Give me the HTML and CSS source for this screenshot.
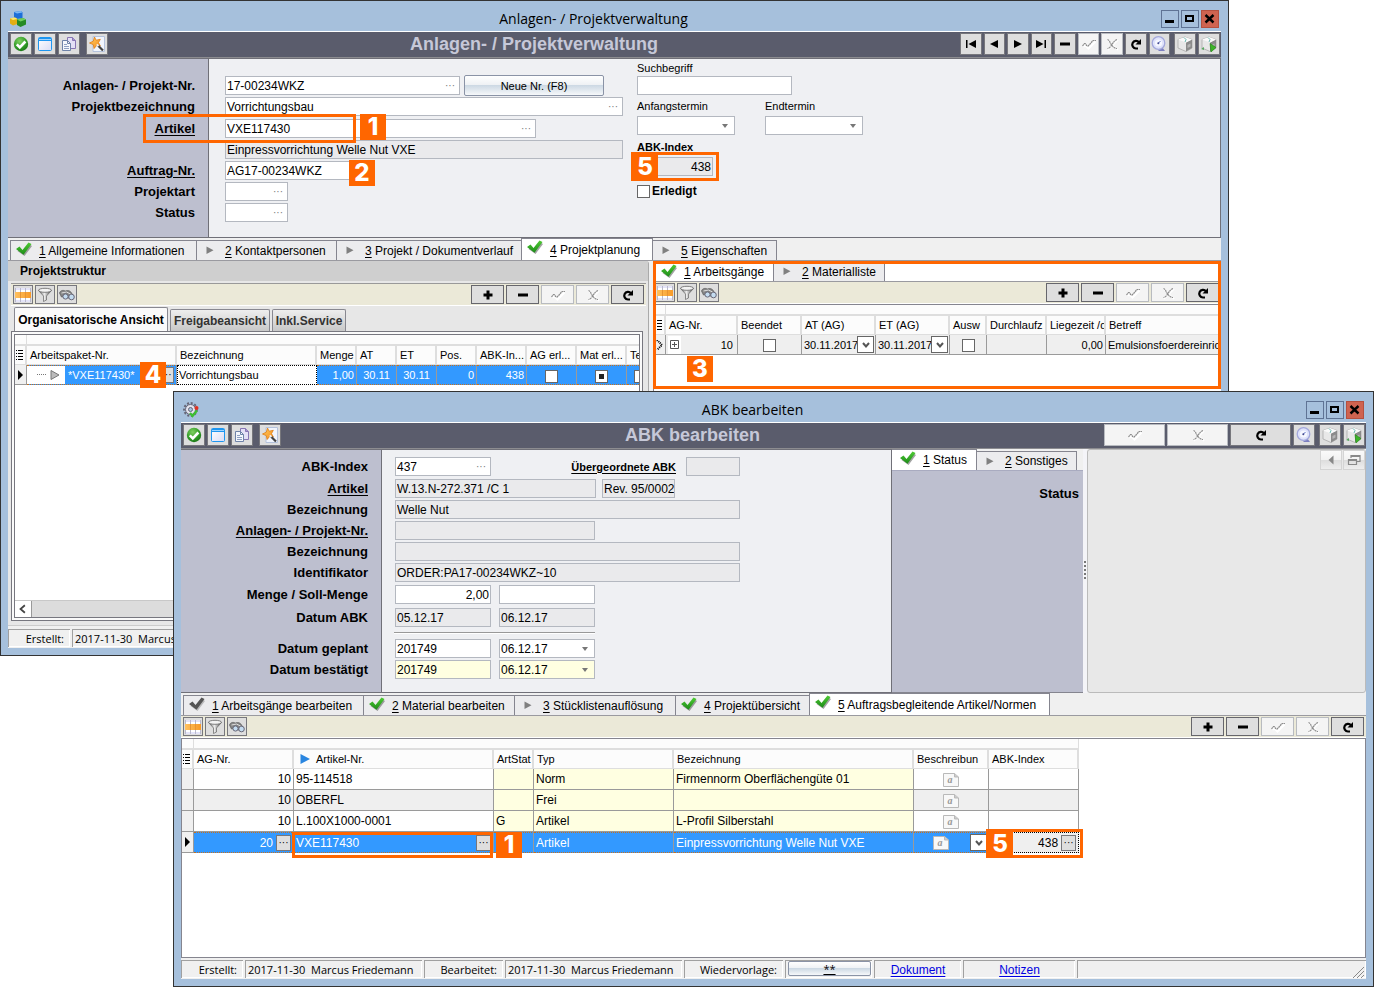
FILE: index.html
```html
<!DOCTYPE html>
<html lang="de">
<head>
<meta charset="utf-8">
<title>Anlagen- / Projektverwaltung</title>
<link rel="stylesheet" href="styles.css">
</head>
<body>
<svg class="sprite" aria-hidden="true">
  <defs>
    <radialGradient id="g-green" cx=".4" cy=".3" r=".8"><stop offset="0" stop-color="#7fd060"/><stop offset=".6" stop-color="#2f9a25"/><stop offset="1" stop-color="#146a12"/></radialGradient>
    <linearGradient id="g-check" x1="0" y1="0" x2="0" y2="1"><stop offset="0" stop-color="#4fcc34"/><stop offset="1" stop-color="#1c8a18"/></linearGradient>
    <linearGradient id="g-pane" x1="0" y1="0" x2="1" y2="1"><stop offset="0" stop-color="#fff"/><stop offset="1" stop-color="#d9dcf5"/></linearGradient>
    <linearGradient id="g-metal" x1="0" y1="0" x2="1" y2="0"><stop offset="0" stop-color="#555"/><stop offset=".45" stop-color="#eee"/><stop offset="1" stop-color="#444"/></linearGradient>
    <linearGradient id="g-orange" x1="0" y1="0" x2="1" y2="1"><stop offset="0" stop-color="#ffd060"/><stop offset="1" stop-color="#f58a1c"/></linearGradient>
    <linearGradient id="g-band" x1="0" y1="0" x2="1" y2="0"><stop offset="0" stop-color="#ffc260"/><stop offset="1" stop-color="#f79a28"/></linearGradient>
    <symbol id="i-ok" viewBox="0 0 16 16"><circle cx="8" cy="8" r="7.2" fill="url(#g-green)"/><path d="M3.8 8.3l3 3 5.6-5.8" fill="none" stroke="#fff" stroke-width="2.6"/></symbol>
    <symbol id="i-window" viewBox="0 0 16 16"><rect x="1.5" y="1.5" width="13" height="13" rx="1" fill="url(#g-pane)" stroke="#1e96f0"/><path d="M2 2.5h12M2 4.5h12" stroke="#1e96f0"/><path d="M2 3.5h12" stroke="#9fd4ff"/></symbol>
    <symbol id="i-docs" viewBox="0 0 16 16"><path d="M6.5 1.500h5l3 3v8h-8z" fill="#e4e0f6" stroke="#8876b4"/><path d="M11.500 1.500v3h3" fill="#a796d0" stroke="#8876b4"/><path d="M1.500 4.500h5l3 3v7h-8z" fill="#f4f7fc" stroke="#6f83a8"/><path d="M6.500 4.500v3h3" fill="none" stroke="#6f83a8"/><path d="M3 8.500h3M3 10.500h5M3 12.500h5" stroke="#8ea0c2"/></symbol>
    <symbol id="i-wand" viewBox="0 0 16 16"><path d="M4 .5h11.500v15H4z" fill="#f1f5fd" stroke="#b4c2dc"/><path d="M5.500 1l1.600 3.200 4.200-.9-1.800 3.300 1.900 3.400-3.800-.5-2.500 3-.8-3.900L.5 7l3.800-1.800z" fill="url(#g-orange)" stroke="#e07c10" stroke-width=".8"/><path d="M9 9.500l5 5" stroke="#444" stroke-width="2.200"/><path d="M7.800 8.300l1.700 1.700" stroke="#eee" stroke-width="1.800"/></symbol>
    <symbol id="i-first" viewBox="0 0 16 16"><path d="M3 4h1.500v8H3zM13 4v8L5.500 8z"/></symbol>
    <symbol id="i-prev" viewBox="0 0 16 16"><path d="M12 4v8L4 8z"/></symbol>
    <symbol id="i-next" viewBox="0 0 16 16"><path d="M4 4v8l8-4z"/></symbol>
    <symbol id="i-last" viewBox="0 0 16 16"><path d="M11.500 4H13v8h-1.500zM3 4v8l7.500-4z"/></symbol>
    <symbol id="i-minus" viewBox="0 0 16 16"><path d="M3 6.500h10v3H3z"/></symbol>
    <symbol id="i-plus" viewBox="0 0 16 16"><path d="M6.500 3.500h3v3h3v3h-3v3h-3v-3h-3v-3h3z"/></symbol>
    <symbol id="i-commit" viewBox="0 0 16 16"><path d="M2.500 10.500l2-1 3 3 7-7" fill="none" stroke="#fff" stroke-width="2"/><path d="M1.500 10l2-2.500h1l1 2 1.500.5 2-2 3-3.500H15" fill="none" stroke="#8c8c8c" stroke-width="1.200" stroke-dasharray="2 .5"/></symbol>
    <symbol id="i-cancel" viewBox="0 0 16 16"><path d="M4 4l10 10M14 4L4 14" stroke="#fff" stroke-width="1.500"/><path d="M3.500 3.500c3 1 3 8 9.500 9M13 3.500c-5 2-5 8-9.500 9" fill="none" stroke="#8c8c8c" stroke-width="1.200" stroke-dasharray="2 .5"/></symbol>
    <symbol id="i-refresh" viewBox="0 0 16 16"><path d="M10 12.500H8a3.800 3.800 0 1 1 3-6.200" fill="none" stroke="#000" stroke-width="2.200"/><path d="M13 3v5.500H7.500z"/></symbol>
    <symbol id="i-clock" viewBox="0 0 16 16"><path d="M11 11l3 4H7z" fill="#7c7fc0"/><circle cx="7.500" cy="7" r="6.300" fill="#dfe3fb" stroke="#a3a8dc" stroke-width="1.300"/><circle cx="7.500" cy="7" r="3.600" fill="#f6f7ff"/><path d="M7.500 7l2-2" stroke="#5c74c8"/><circle cx="7.300" cy="7.300" r="1" fill="#444a90"/></symbol>
    <symbol id="i-box" viewBox="0 0 16 16"><path d="M1 3.500L8 1l7 2.500V12l-6 3.500L1 12z" fill="#e8e8e8" stroke="#aaa" stroke-width=".8"/><path d="M9 6.500l6-3V12l-6 3.500z" fill="#8b8b8b"/><path d="M1 3.500l8 3 6-3L8 1z" fill="#fafafa"/><path d="M7 1.500l2 2-1 2.500" stroke="#68b8b0" fill="none"/><path d="M10.500 9l3-1.500v3L10.500 12z" fill="#b5b5b5"/></symbol>
    <symbol id="i-boxgo" viewBox="0 0 16 16"><use href="#i-box"/><path d="M0 13l3-2v3z" fill="#58a860"/><path d="M9 7.500l6 4-5 4.500z" fill="#3cb428" stroke="#238414" stroke-width=".6"/></symbol>
    <symbol id="i-grid" viewBox="0 0 16 16"><path d="M0 1h16v14H0z" fill="#fff"/><path d="M0 1h16v2H0zM0 13h16v2H0z" fill="#e4e4f8"/><path d="M.5 1v14M5.500 1v14M10.500 1v14M15.500 1v14" stroke="#b9b9cc"/><path d="M0 5h16v6H0z" fill="url(#g-band)"/><path d="M5.500 5v6M10.500 5v6" stroke="#e79434"/></symbol>
    <symbol id="i-filter" viewBox="0 0 16 16"><path d="M1.500 3.500L6.500 9v5.500l3-1.500V9l5-5.500z" fill="url(#g-metal)" stroke="#666" stroke-width=".7"/><ellipse cx="8" cy="3.300" rx="6.500" ry="2" fill="#f3f3f3" stroke="#666" stroke-width=".8"/></symbol>
    <symbol id="i-find" viewBox="0 0 16 16"><path d="M.5 6c1-3 4-3 6-2 3-1 5 0 6 2l2 3-5 2-3-2-4 1z" fill="#868686" stroke="#555" stroke-width=".7"/><circle cx="6.500" cy="9.500" r="2.600" fill="#c4dcf0" stroke="#667"/><circle cx="12.500" cy="10" r="2.800" fill="#c4dcf0" stroke="#667"/><path d="M2.500 6l5-1 4 2" stroke="#ddd" fill="none"/></symbol>
    <symbol id="i-check" viewBox="0 0 16 16"><path d="M1.500 9L4 7l3 3L13.500 2.500 16 4 8.500 14z" fill="#666" opacity=".6"/><path d="M0 7l3.500-2.500L6.500 8l6-7.500L15.500 2 7.500 12.800z" fill="url(#g-check)"/></symbol>
    <symbol id="i-check-gray" viewBox="0 0 16 16"><path d="M1.500 9L4 7l3 3L13.500 2.500 16 4 8.500 14z" fill="#999" opacity=".6"/><path d="M0 7l3.500-2.500L6.500 8l6-7.500L15.500 2 7.500 12.800z" fill="#555"/></symbol>
    <symbol id="i-play" viewBox="0 0 16 16"><path d="M4.500 4.500v7.500l7-3.700z" fill="#808080"/></symbol>
    <symbol id="i-logo" viewBox="0 0 16 16"><path d="M4 1l7-1 1.500 1.500V7L7 8 4 6.500z" fill="#1d6fd8"/><path d="M4 1l7-1 1.500 1.500L7 2.500z" fill="#7cb8f5"/><path d="M0 7.500l5-1L7.500 8v5L3 14.500l-3-2z" fill="#e2ae14"/><path d="M0 7.500l5-1L7.500 8 3 9z" fill="#ffe868"/><path d="M7 8.500l6-1.500 3 1.500v5L10.500 16 7 14z" fill="#258a24"/><path d="M7 8.500l6-1.500 3 1.500-5.500 2z" fill="#70cf5c"/></symbol>
    <symbol id="i-gear" viewBox="0 0 16 16"><circle cx="7.500" cy="7.500" r="5" fill="#e4e4ee" stroke="#667" stroke-width="1"/><circle cx="7.500" cy="7.500" r="6.400" fill="none" stroke="#667" stroke-width="2" stroke-dasharray="2 1.700"/><circle cx="7.500" cy="7.500" r="2" fill="#a6c0dc" stroke="#667"/><circle cx="13.500" cy="6" r="2" fill="#e03020"/><path d="M7 11l2.500 3L14 8.500" fill="none" stroke="#3cc030" stroke-width="2.200"/></symbol>
    <symbol id="i-list" viewBox="0 0 8 10"><path d="M0 .5h1M2 .5h5M0 3.500h1M2 3.500h5M0 6.500h1M2 6.500h5M0 9.500h1M2 9.500h5" stroke="#000" /></symbol>
    <symbol id="i-row" viewBox="0 0 8 10"><path d="M1 0v10l5-5z"/></symbol>
    <symbol id="i-memo" viewBox="0 0 16 14"><path d="M.5.500h11l4 3.500v9.500H.5z" fill="#f8f8f8" stroke="#b9b9b9"/><path d="M11.500.500V4h4" fill="#ccc" stroke="#b9b9b9"/></symbol>
    <symbol id="i-drop" viewBox="0 0 8 8"><path d="M1 2l3 3.500L7 2" fill="none" stroke="#555" stroke-width="2"/></symbol>
  </defs>
</svg>

<main class="desktop">

<section class="window window-project" aria-label="Anlagen- / Projektverwaltung">
  <header class="titlebar">
    <svg class="icon"><use href="#i-logo"/></svg>
    <h1 class="title">Anlagen- / Projektverwaltung</h1>
    <div class="winbtns">
      <button class="winbtn" aria-label="Minimieren"><svg viewBox="0 0 16 16"><path d="M3 9h9v3H3z"/></svg></button>
      <button class="winbtn" aria-label="Maximieren"><svg viewBox="0 0 16 16"><path d="M4 5h7v5H4z" fill="none" stroke="#000" stroke-width="2"/></svg></button>
      <button class="winbtn close" aria-label="Schließen"><svg viewBox="0 0 16 16"><path d="M3.500 4l8 7.500M11.500 4l-8 7.500" stroke="#000" stroke-width="2.400"/></svg></button>
    </div>
  </header>
  <div class="client">
    <div class="actionbar">
      <div class="bar-group">
        <button class="tool" aria-label="OK"><svg class="icon"><use href="#i-ok"/></svg></button>
        <button class="tool" aria-label="Fenster"><svg class="icon"><use href="#i-window"/></svg></button>
        <button class="tool" aria-label="Kopieren"><svg class="icon"><use href="#i-docs"/></svg></button>
        <button class="tool apart" aria-label="Assistent"><svg class="icon"><use href="#i-wand"/></svg></button>
      </div>
      <h2 class="bar-title">Anlagen- / Projektverwaltung</h2>
      <div class="bar-group nav">
        <div class="navset">
          <button class="tool" aria-label="Erster"><svg class="icon"><use href="#i-first"/></svg></button>
          <button class="tool" aria-label="Vorheriger"><svg class="icon"><use href="#i-prev"/></svg></button>
          <button class="tool" aria-label="Nächster"><svg class="icon"><use href="#i-next"/></svg></button>
          <button class="tool" aria-label="Letzter"><svg class="icon"><use href="#i-last"/></svg></button>
          <button class="tool" aria-label="Löschen"><svg class="icon"><use href="#i-minus"/></svg></button>
          <button class="tool off" disabled aria-label="Speichern"><svg class="icon"><use href="#i-commit"/></svg></button>
          <button class="tool off" disabled aria-label="Verwerfen"><svg class="icon"><use href="#i-cancel"/></svg></button>
          <button class="tool" aria-label="Aktualisieren"><svg class="icon"><use href="#i-refresh"/></svg></button>
          <button class="tool" aria-label="Wiedervorlage"><svg class="icon"><use href="#i-clock"/></svg></button>
        </div>
        <button class="tool" aria-label="Paket"><svg class="icon"><use href="#i-box"/></svg></button>
        <button class="tool" aria-label="Paket starten"><svg class="icon"><use href="#i-boxgo"/></svg></button>
      </div>
    </div>

    <div class="form form-project">
      <div class="rows">
        <div class="row"><label for="p-nr">Anlagen- / Projekt-Nr.</label><span class="field w235"><input id="p-nr" value="17-00234WKZ"><button class="dots" aria-label="Auswahl">···</button></span><button class="glossy">Neue Nr. (F8)</button></div>
        <div class="row"><label for="p-bez">Projektbezeichnung</label><span class="field w398"><input id="p-bez" value="Vorrichtungsbau"><button class="dots" aria-label="Auswahl">···</button></span></div>
        <div class="row lead1"><label for="p-art" class="link">Artikel</label><span class="field w311"><input id="p-art" value="VXE117430"><button class="dots" aria-label="Auswahl">···</button></span></div>
        <div class="row"><label></label><span class="field ro w398"><input aria-label="Artikelbezeichnung" readonly value="Einpressvorrichtung Welle Nut VXE"></span></div>
        <div class="row"><label for="p-auf" class="link">Auftrag-Nr.</label><span class="field w126"><input id="p-auf" value="AG17-00234WKZ"></span></div>
        <div class="row"><label for="p-typ">Projektart</label><span class="field w63"><input id="p-typ"><button class="dots" aria-label="Auswahl">···</button></span></div>
        <div class="row"><label for="p-st">Status</label><span class="field w63"><input id="p-st"><button class="dots" aria-label="Auswahl">···</button></span></div>
      </div>
      <div class="side">
        <div class="stack"><label for="p-such">Suchbegriff</label><span class="field w155"><input id="p-such"></span></div>
        <div class="pair">
          <div class="stack"><label for="p-anf">Anfangstermin</label><select id="p-anf" class="combo w98"><option></option></select></div>
          <div class="stack"><label for="p-end">Endtermin</label><select id="p-end" class="combo w98"><option></option></select></div>
        </div>
        <div class="stack index"><label for="p-abk"><b>ABK-Index</b></label><span class="field ro num w76"><input id="p-abk" readonly value="438"></span></div>
        <label class="tick"><input type="checkbox">Erledigt</label>
      </div>
    </div>

    <div class="tabs" role="tablist">
      <button class="tab t186" role="tab"><svg class="icon"><use href="#i-check"/></svg><span><u>1</u> Allgemeine Informationen</span></button>
      <button class="tab t140" role="tab"><svg class="icon"><use href="#i-play"/></svg><span><u>2</u> Kontaktpersonen</span></button>
      <button class="tab t185" role="tab"><svg class="icon"><use href="#i-play"/></svg><span><u>3</u> Projekt / Dokumentverlauf</span></button>
      <button class="tab t131 active" role="tab" aria-selected="true"><svg class="icon"><use href="#i-check"/></svg><span><u>4</u> Projektplanung</span></button>
      <button class="tab t124" role="tab"><svg class="icon"><use href="#i-play"/></svg><span><u>5</u> Eigenschaften</span></button>
    </div>

    <div class="split">
      <div class="structure">
        <h3 class="panel-head">Projektstruktur</h3>
        <div class="gridbar">
          <button class="mini" aria-label="Ansicht"><svg class="icon"><use href="#i-grid"/></svg></button>
          <button class="mini" aria-label="Filter"><svg class="icon"><use href="#i-filter"/></svg></button>
          <button class="mini" aria-label="Suchen"><svg class="icon"><use href="#i-find"/></svg></button>
          <span class="spring"></span>
          <button class="wide" aria-label="Neu"><svg class="icon"><use href="#i-plus"/></svg></button>
          <button class="wide" aria-label="Löschen"><svg class="icon"><use href="#i-minus"/></svg></button>
          <button class="wide off" disabled aria-label="Speichern"><svg class="icon"><use href="#i-commit"/></svg></button>
          <button class="wide off" disabled aria-label="Verwerfen"><svg class="icon"><use href="#i-cancel"/></svg></button>
          <button class="wide" aria-label="Aktualisieren"><svg class="icon"><use href="#i-refresh"/></svg></button>
        </div>
        <div class="subtabs" role="tablist">
          <button class="subtab s154 active" role="tab" aria-selected="true">Organisatorische Ansicht</button>
          <button class="subtab s100" role="tab">Freigabeansicht</button>
          <button class="subtab s74" role="tab">Inkl.Service</button>
        </div>
        <div class="frame">
          <div class="frame-in">
            <div class="gridclip">
            <table class="grid grid-structure">
              <colgroup><col class="c12"><col class="c150"><col class="c140"><col class="c40"><col class="c40"><col class="c40"><col class="c40"><col class="c50"><col class="c50"><col class="c50"><col class="c50"></colgroup>
              <thead>
                <tr class="band"><td></td><td colspan="10"></td></tr>
                <tr><th><svg class="mark"><use href="#i-list"/></svg></th><th>Arbeitspaket-Nr.</th><th>Bezeichnung</th><th>Menge</th><th>AT</th><th>ET</th><th>Pos.</th><th>ABK-In...</th><th>AG erl...</th><th>Mat erl...</th><th>Te</th></tr>
              </thead>
              <tbody>
                <tr class="sel"><td class="ind"><svg class="mark"><use href="#i-row"/></svg></td><td class="tree"><div class="treecell"><svg class="node" viewBox="0 0 38 18"><path d="M10 8.500h10" stroke="#777" stroke-dasharray="1 1"/><path d="M24 4.500v9l8-4.500z" fill="#bbb" stroke="#777"/></svg><span>*VXE117430*</span><button class="cellbtn" aria-label="Auswahl">···</button></div></td><td class="focus">Vorrichtungsbau</td><td class="r">1,00</td><td class="c">30.11</td><td class="c">30.11</td><td class="r">0</td><td class="r">438</td><td class="c"><input type="checkbox" aria-label="AG erledigt"></td><td class="c"><input type="checkbox" checked aria-label="Mat erledigt"></td><td class="tick-cell"><input type="checkbox" aria-label="Te"></td></tr>
              </tbody>
            </table>
            </div>
            <div class="scroll"><button class="scroll-btn" aria-label="Nach links"><svg viewBox="0 0 8 8"><path d="M5.500 1L2 4l3.500 3" fill="none" stroke="#444" stroke-width="1.400"/></svg></button><span class="thumb"></span></div>
          </div>
        </div>
      </div>

      <div class="operations">
        <div class="tabs inner" role="tablist">
          <button class="tab t119 active" role="tab" aria-selected="true"><svg class="icon"><use href="#i-check"/></svg><span><u>1</u> Arbeitsgänge</span></button>
          <button class="tab t111" role="tab"><svg class="icon"><use href="#i-play"/></svg><span><u>2</u> Materialliste</span></button>
        </div>
        <div class="gridbar">
          <button class="mini" aria-label="Ansicht"><svg class="icon"><use href="#i-grid"/></svg></button>
          <button class="mini" aria-label="Filter"><svg class="icon"><use href="#i-filter"/></svg></button>
          <button class="mini" aria-label="Suchen"><svg class="icon"><use href="#i-find"/></svg></button>
          <span class="spring"></span>
          <button class="wide" aria-label="Neu"><svg class="icon"><use href="#i-plus"/></svg></button>
          <button class="wide" aria-label="Löschen"><svg class="icon"><use href="#i-minus"/></svg></button>
          <button class="wide off" disabled aria-label="Speichern"><svg class="icon"><use href="#i-commit"/></svg></button>
          <button class="wide off" disabled aria-label="Verwerfen"><svg class="icon"><use href="#i-cancel"/></svg></button>
          <button class="wide" aria-label="Aktualisieren"><svg class="icon"><use href="#i-refresh"/></svg></button>
        </div>
        <div class="gridclip boxed">
          <table class="grid grid-ops">
            <colgroup><col class="c12"><col class="c72"><col class="c64"><col class="c74"><col class="c74"><col class="c37"><col class="c60"><col class="c59"><col class="c140"></colgroup>
            <thead>
              <tr class="band"><td></td><td colspan="8"></td></tr>
              <tr><th><svg class="mark"><use href="#i-list"/></svg></th><th>AG-Nr.</th><th>Beendet</th><th>AT (AG)</th><th>ET (AG)</th><th>Ausw</th><th>Durchlaufz</th><th>Liegezeit /d</th><th>Betreff</th></tr>
            </thead>
            <tbody>
              <tr class="alt"><td class="ind"><svg class="mark"><path d="M1 0l5 5-5 5" fill="none" stroke="#000" stroke-dasharray="1 1" stroke-width="2"/></svg></td><td><div class="expand"><button aria-label="Aufklappen"><svg viewBox="0 0 9 9"><path d="M.5.5h8v8h-8zM2 4.500h5M4.500 2v5" fill="none" stroke="#555"/></svg></button><span>10</span></div></td><td class="c"><input type="checkbox" aria-label="Beendet"></td><td><div class="datecell"><span>30.11.2017</span><button aria-label="Datum wählen"><svg><use href="#i-drop"/></svg></button></div></td><td><div class="datecell"><span>30.11.2017</span><button aria-label="Datum wählen"><svg><use href="#i-drop"/></svg></button></div></td><td class="c"><input type="checkbox" aria-label="Auswahl"></td><td></td><td class="r">0,00</td><td>Emulsionsfoerdereinric</td></tr>
            </tbody>
          </table>
        </div>
        <span class="callout around"></span>
        <span class="badge b3">3</span>
      </div>
    </div>

    <footer class="statusbar">
      <span class="cell key k62">Erstellt:</span>
      <span class="cell val grow">2017-11-30&nbsp; Marcus Friedemann</span>
    </footer>
  </div>
  <span class="callout m1"></span><span class="badge b1">1</span>
  <span class="badge b2">2</span>
  <span class="callout m5"></span><span class="badge b5">5</span>
  <span class="badge b4">4</span>
</section>

<section class="window window-abk" aria-label="ABK bearbeiten">
  <header class="titlebar">
    <svg class="icon"><use href="#i-gear"/></svg>
    <h1 class="title">ABK bearbeiten</h1>
    <div class="winbtns">
      <button class="winbtn" aria-label="Minimieren"><svg viewBox="0 0 16 16"><path d="M3 9h9v3H3z"/></svg></button>
      <button class="winbtn" aria-label="Maximieren"><svg viewBox="0 0 16 16"><path d="M4 5h7v5H4z" fill="none" stroke="#000" stroke-width="2"/></svg></button>
      <button class="winbtn close" aria-label="Schließen"><svg viewBox="0 0 16 16"><path d="M3.500 4l8 7.500M11.500 4l-8 7.500" stroke="#000" stroke-width="2.400"/></svg></button>
    </div>
  </header>
  <div class="client">
    <div class="actionbar">
      <div class="bar-group">
        <button class="tool" aria-label="OK"><svg class="icon"><use href="#i-ok"/></svg></button>
        <button class="tool" aria-label="Fenster"><svg class="icon"><use href="#i-window"/></svg></button>
        <button class="tool" aria-label="Kopieren"><svg class="icon"><use href="#i-docs"/></svg></button>
        <button class="tool apart" aria-label="Assistent"><svg class="icon"><use href="#i-wand"/></svg></button>
      </div>
      <h2 class="bar-title">ABK bearbeiten</h2>
      <div class="bar-group nav">
        <div class="navset long">
          <button class="tool off" disabled aria-label="Speichern"><svg class="icon"><use href="#i-commit"/></svg></button>
          <button class="tool off" disabled aria-label="Verwerfen"><svg class="icon"><use href="#i-cancel"/></svg></button>
          <button class="tool" aria-label="Aktualisieren"><svg class="icon"><use href="#i-refresh"/></svg></button>
        </div>
        <button class="tool clock" aria-label="Wiedervorlage"><svg class="icon"><use href="#i-clock"/></svg></button>
        <button class="tool" aria-label="Paket"><svg class="icon"><use href="#i-box"/></svg></button>
        <button class="tool" aria-label="Paket starten"><svg class="icon"><use href="#i-boxgo"/></svg></button>
      </div>
    </div>

    <div class="upper">
      <div class="form form-abk">
        <div class="rows">
          <div class="row"><label for="a-ix">ABK-Index</label><span class="field w96"><input id="a-ix" value="437"><button class="dots" aria-label="Auswahl">···</button></span><label for="a-up" class="link small">Übergeordnete ABK</label><span class="field ro w54"><input id="a-up" readonly></span></div>
          <div class="row lead1"><label for="a-art" class="link">Artikel</label><span class="field ro w201"><input id="a-art" readonly value="W.13.N-272.371 /C 1"></span><span class="field ro w73"><input aria-label="Revision" readonly value="Rev. 95/0002"></span></div>
          <div class="row"><label for="a-bez">Bezeichnung</label><span class="field ro w345"><input id="a-bez" readonly value="Welle Nut"></span></div>
          <div class="row"><label for="a-pr" class="link">Anlagen- / Projekt-Nr.</label><span class="field ro w200"><input id="a-pr" readonly></span></div>
          <div class="row"><label for="a-bz2">Bezeichnung</label><span class="field ro w345"><input id="a-bz2" readonly></span></div>
          <div class="row"><label for="a-id">Identifikator</label><span class="field ro w345"><input id="a-id" readonly value="ORDER:PA17-00234WKZ~10"></span></div>
          <div class="row lead1"><label for="a-mg">Menge / Soll-Menge</label><span class="field num w96"><input id="a-mg" value="2,00"></span><span class="field w96"><input aria-label="Soll-Menge"></span></div>
          <div class="row lead2"><label for="a-dat">Datum ABK</label><span class="field ro w96"><input id="a-dat" readonly value="05.12.17"></span><span class="field ro w96"><input aria-label="Datum ABK bis" readonly value="06.12.17"></span></div>
          <hr>
          <div class="row"><label for="a-gp">Datum geplant</label><span class="field w96"><input id="a-gp" value="201749"></span><select class="combo w96" aria-label="Datum geplant"><option>06.12.17</option></select></div>
          <div class="row"><label for="a-bs">Datum bestätigt</label><span class="field yellow w96"><input id="a-bs" value="201749"></span><select class="combo yellow w96" aria-label="Datum bestätigt"><option>06.12.17</option></select></div>
        </div>
      </div>
      <div class="statuspane">
        <div class="tabs" role="tablist">
          <button class="tab t84 active" role="tab" aria-selected="true"><svg class="icon"><use href="#i-check"/></svg><span><u>1</u> Status</span></button>
          <button class="tab t100" role="tab"><svg class="icon"><use href="#i-play"/></svg><span><u>2</u> Sonstiges</span></button>
        </div>
        <div class="statusbody">Status</div>
      </div>
      <div class="splitter"><svg viewBox="0 0 4 20"><path d="M2 0v20" stroke="#777" stroke-width="2" stroke-dasharray="2 2"/></svg></div>
      <div class="preview">
        <button class="flat" aria-label="Zurück"><svg viewBox="0 0 16 16"><path d="M10.500 3.500v9L5.500 8z" fill="#888"/></svg></button>
        <button class="flat" aria-label="Fenster lösen"><svg viewBox="0 0 16 16"><path d="M5 6V3.500h9v6h-3M5 4.500h9M2.500 7.500h8v5h-8zM2.500 8.500h8" fill="none" stroke="#888" stroke-width="1.200"/></svg></button>
      </div>
    </div>

    <div class="tabs" role="tablist">
      <button class="tab t180" role="tab"><svg class="icon"><use href="#i-check-gray"/></svg><span><u>1</u> Arbeitsgänge bearbeiten</span></button>
      <button class="tab t151" role="tab"><svg class="icon"><use href="#i-check"/></svg><span><u>2</u> Material bearbeiten</span></button>
      <button class="tab t161" role="tab"><svg class="icon"><use href="#i-play"/></svg><span><u>3</u> Stücklistenauflösung</span></button>
      <button class="tab t134" role="tab"><svg class="icon"><use href="#i-check"/></svg><span><u>4</u> Projektübersicht</span></button>
      <button class="tab t240 active" role="tab" aria-selected="true"><svg class="icon"><use href="#i-check"/></svg><span><u>5</u> Auftragsbegleitende Artikel/Normen</span></button>
    </div>
    <div class="gridbar">
      <button class="mini" aria-label="Ansicht"><svg class="icon"><use href="#i-grid"/></svg></button>
      <button class="mini" aria-label="Filter"><svg class="icon"><use href="#i-filter"/></svg></button>
      <button class="mini" aria-label="Suchen"><svg class="icon"><use href="#i-find"/></svg></button>
      <span class="spring"></span>
      <button class="wide" aria-label="Neu"><svg class="icon"><use href="#i-plus"/></svg></button>
      <button class="wide" aria-label="Löschen"><svg class="icon"><use href="#i-minus"/></svg></button>
      <button class="wide off" disabled aria-label="Speichern"><svg class="icon"><use href="#i-commit"/></svg></button>
      <button class="wide off" disabled aria-label="Verwerfen"><svg class="icon"><use href="#i-cancel"/></svg></button>
      <button class="wide" aria-label="Aktualisieren"><svg class="icon"><use href="#i-refresh"/></svg></button>
    </div>
    <div class="gridclip boxed">
      <table class="grid grid-items">
        <colgroup><col class="c12"><col class="c100"><col class="c200"><col class="c40"><col class="c140"><col class="c240"><col class="c75"><col class="c90"></colgroup>
        <thead>
          <tr class="band"><td></td><td colspan="7"></td></tr>
          <tr><th><svg class="mark"><use href="#i-list"/></svg></th><th>AG-Nr.</th><th><span class="sorted"><svg viewBox="0 0 10 10"><path d="M.5 0v10L10 5z" fill="#2a86e0"/></svg>Artikel-Nr.</span></th><th>ArtStat</th><th>Typ</th><th>Bezeichnung</th><th>Beschreibun</th><th>ABK-Index</th></tr>
        </thead>
        <tbody>
          <tr><td class="ind"></td><td class="r">10</td><td>95-114518</td><td class="y"></td><td class="y">Norm</td><td class="y">Firmennorm Oberflächengüte 01</td><td class="c"><span class="memo"><svg><use href="#i-memo"/></svg><i>a</i></span></td><td></td></tr>
          <tr class="alt"><td class="ind"></td><td class="r">10</td><td>OBERFL</td><td class="y"></td><td class="y">Frei</td><td class="y"></td><td class="c"><span class="memo"><svg><use href="#i-memo"/></svg><i>a</i></span></td><td></td></tr>
          <tr><td class="ind"></td><td class="r">10</td><td>L.100X1000-0001</td><td class="y">G</td><td class="y">Artikel</td><td class="y">L-Profil Silberstahl</td><td class="c"><span class="memo"><svg><use href="#i-memo"/></svg><i>a</i></span></td><td></td></tr>
          <tr class="sel"><td class="ind"><svg class="mark"><use href="#i-row"/></svg></td><td><div class="btncell end"><span>20</span><button class="cellbtn" aria-label="Auswahl">···</button></div></td><td><div class="btncell"><span>VXE117430</span><button class="cellbtn" aria-label="Auswahl">···</button></div></td><td></td><td>Artikel</td><td>Einpressvorrichtung Welle Nut VXE</td><td><div class="memocell"><span class="memo"><svg><use href="#i-memo"/></svg><i>a</i></span><button aria-label="Öffnen"><svg><use href="#i-drop"/></svg></button></div></td><td class="focus gray"><div class="btncell end"><span>438</span><button class="cellbtn" aria-label="Auswahl">···</button></div></td></tr>
        </tbody>
      </table>
    </div>

    <footer class="statusbar">
      <span class="cell key k62">Erstellt:</span>
      <span class="cell val k177">2017-11-30&nbsp; Marcus Friedemann</span>
      <span class="cell key k79">Bearbeitet:</span>
      <span class="cell val k177">2017-11-30&nbsp; Marcus Friedemann</span>
      <span class="cell key k99">Wiedervorlage:</span>
      <span class="cell k87"><button class="glossy slim"><u>**</u></button></span>
      <span class="cell k87 mid"><a href="#dokument">Dokument</a></span>
      <span class="cell k112 mid"><a href="#notizen">Notizen</a></span>
      <span class="cell grow last"><svg class="grip" viewBox="0 0 12 12"><path d="M1 12L12 1M5 12l7-7M9 12l3-3" stroke="#888"/></svg></span>
    </footer>
  </div>
  <span class="callout n1"></span><span class="badge nb1">1</span>
  <span class="callout n5"></span><span class="badge nb5">5</span>
</section>

</main>
</body>
</html>
```
FILE: styles.css
```css
* { box-sizing: border-box; }
body { margin: 0; background: #fff; color: #000; font: 12px/16px "Liberation Sans", Arial, sans-serif; }
button, input, select { font: inherit; color: inherit; margin: 0; padding: 0; }
button { display: flex; align-items: center; justify-content: center; cursor: default; }
h1, h2, h3 { margin: 0; }
.sprite { position: absolute; width: 0; height: 0; }
.icon { width: 16px; height: 16px; flex: none; display: block; }

.desktop { position: relative; min-height: 100vh; overflow: hidden; }

/* windows */
.window { position: absolute; display: flex; flex-direction: column; padding: 1px 8px 8px; background: #a6c0dc; box-shadow: inset 0 0 0 1px #333; }
.window-project { top: 0; left: 0; right: 145px; bottom: 331px; }
.window-abk { top: 391px; left: 173px; right: 0; bottom: 0; }
.titlebar { display: flex; align-items: center; height: 30px; flex: none; padding: 5px 2px 0 2px; }
.title { flex: 1; text-align: center; font: 14px/20px "Open Sans", "Noto Sans", sans-serif; }
.winbtns { display: flex; gap: 2px; }
.winbtn { width: 18px; height: 18px; border: 1px solid #5f7394; background: #a6c0dc; }
.winbtn svg { width: 16px; height: 16px; }
.winbtn.close { background: #cf6350; border-color: #b5503f; }
.client { flex: 1; min-height: 0; display: flex; flex-direction: column; border-top: 1px solid #fff; background: #f0f0f0; }

.actionbar { display: flex; align-items: center; height: 26px; flex: none; padding: 0 1px 1px 2px; background: #5a5c6c; border-bottom: 1px solid #8c8c90; }
.bar-group { display: flex; gap: 2px; flex: none; }
.bar-title { flex: 1; text-align: center; font-size: 18px; line-height: 22px; color: #c6c8d8; }
.tool { width: 22px; height: 22px; border: 1px solid #77777c; background: #dedede; flex: none; }
.tool.apart { margin-left: 4px; }
.tool.off, .wide.off { background: #f4f4f4; border-color: #b8bbc0; }
.navset { display: flex; gap: 2px; width: 210px; margin-right: 2px; flex: none; }
.navset .tool { flex: 1; width: auto; }
.navset.long { width: 187px; margin-right: 0; }
.tool.clock { margin-right: 2px; }

/* forms */
.form { background: linear-gradient(90deg, #bdbfcf 200px, #707078 200px, #707078 201px, #eff0f3 201px); border: solid #707078; border-width: 1px 1px 1px 0; flex: none; display: flex; }
.form-project { padding: 17px 0 15px; gap: 14px; border-left: 0; }
.rows { display: flex; flex-direction: column; gap: 2px; }
.row { display: flex; align-items: center; height: 19px; }
.row > label:first-child { width: 187px; text-align: right; font-weight: bold; font-size: 13px; flex: none; }
.row.lead1 { margin-top: 1px; }
.row.lead2 { margin-top: 2px; }
.link { text-decoration: underline; text-underline-offset: 2px; }
.form-project .row > label:first-child { margin-right: 30px; }
.form-project .rows { width: 615px; }
.field { display: flex; align-items: center; height: 19px; border: 1px solid #b4b8c0; background: #fff; flex: none; }
.field input { flex: 1; min-width: 0; width: 100%; height: 17px; border: 0; outline: 0; background: transparent; padding: 0 0 0 1px; }
.field.ro { background: #eaeaec; }
.field.num input { text-align: right; padding-right: 1px; }
.yellow.yellow { background-color: #ffffe1; }
.dots { border: 0; background: none; width: 18px; height: 17px; font-size: 10px; color: #777; flex: none; }
.combo { appearance: none; height: 19px; border: 1px solid #b4b8c0; border-radius: 0; background: #fff url("data:image/svg+xml,%3Csvg xmlns='http://www.w3.org/2000/svg' width='6' height='4'%3E%3Cpath d='M0 0h6L3 4z' fill='%23777'/%3E%3C/svg%3E") no-repeat right 6px center; padding: 0 0 0 1px; line-height: 16px; flex: none; }
.glossy { width: 140px; height: 21px; margin-left: 4px; border: 1px solid #8a93a6; border-radius: 2px; background: linear-gradient(#fff, #eef1f4 48%, #cdd9e4 50%, #f6f8fa); font-size: 11px; flex: none; }
.glossy.slim { width: 83px; height: 15px; margin: 0; }
.w54 { width: 54px; } .w63 { width: 63px; } .w73 { width: 73px; } .w76 { width: 76px; }
.w96 { width: 96px; } .w98 { width: 98px; } .w126 { width: 126px; } .w155 { width: 155px; }
.w200 { width: 200px; } .w201 { width: 201px; } .w235 { width: 235px; } .w311 { width: 311px; }
.w345 { width: 345px; } .w398 { width: 398px; }

.side { display: flex; flex-direction: column; margin-top: -16px; }
.side label { font-size: 11px; line-height: 16px; display: block; }
.stack { display: flex; flex-direction: column; align-items: flex-start; }
.pair { display: flex; gap: 30px; margin-top: 3px; }
.pair .stack, .index.stack { gap: 2px; }
.index { margin-top: 4px; }
.side .tick { display: flex; align-items: center; gap: 2px; margin-top: 7px; font-size: 12px; font-weight: bold; }
input[type="checkbox"] { appearance: none; display: inline-block; width: 13px; height: 13px; border: 1px solid #666; background: #fff; vertical-align: middle; flex: none; }
input[type="checkbox"]:checked { background: #222 content-box; padding: 3px; box-shadow: inset 0 0 0 3px #fff; }

.form-abk { width: 711px; padding: 7px 0 13px; }
.form-abk .row { gap: 8px; }
.form-abk .row > label:first-child { margin-right: 19px; }
.form-abk .row .w201 + .field { margin-left: -2px; }
.form-abk .row label.small { font-size: 11px; font-weight: bold; width: 177px; text-align: right; margin-right: 2px; }
.form-abk hr { width: 201px; height: 2px; margin: 3px 0 3px 213px; border: 0; border-top: 1px solid #999; background: #fff; }

/* tabs */
.tabs { display: flex; align-items: flex-end; height: 23px; flex: none; padding-left: 2px; border-bottom: 1px solid #9a9aa0; }
.tab { justify-content: flex-start; gap: 7px; height: 20px; padding: 0 0 0 5px; border: solid #85858f; border-width: 1px 1px 0 1px; margin-left: -1px; background: #ececee; flex: none; white-space: nowrap; }
.tab:first-child { margin-left: 0; }
.tab.active { height: 22px; background: #fff; }
.tab .icon { align-self: flex-start; margin-top: 1px; }
.tab u { text-underline-offset: 2px; }
.t84 { width: 85px; } .t100 { width: 101px; } .t111 { width: 112px; } .t119 { width: 121px; }
.t124 { width: 125px; } .t131 { width: 132px; } .t134 { width: 135px; } .t140 { width: 141px; }
.t151 { width: 152px; } .t161 { width: 162px; } .t180 { width: 181px; } .t185 { width: 186px; }
.t186 { width: 187px; } .t240 { width: 241px; }
.tabs.inner { height: 21px; padding-left: 0; background: #fff; }
.tabs.inner .tab.active { height: 20px; border-top: 0; padding: 2px 0 0 8px; border-left: 0; }

/* project planning */
.split { flex: 1; min-height: 0; display: flex; gap: 4px; }
.structure { width: 641px; flex: none; display: flex; flex-direction: column; background: #e7e7e7; border-right: 1px solid #aaa; border-bottom: 1px solid #ccc; border-radius: 0 3px 3px 0; margin-bottom: 1px; }
.panel-head { height: 20px; font-size: 12px; line-height: 20px; padding-left: 12px; background: #cfcfcf; margin-bottom: 2px; }
.gridbar { display: flex; align-items: center; gap: 2px; height: 22px; flex: none; padding: 0 2px; background: #ebe9d8; border-bottom: 1px solid #fff; }
.structure .gridbar { margin: 0 2px 0 3px; border-top: 1px solid #999; height: 23px; }
.spring { flex: 1; }
.mini { width: 20px; height: 19px; border: 1px solid #77777c; background: #dedede; }
.wide { width: 33px; height: 19px; border: 1px solid #66666c; background: #dedede; }
.subtabs { display: flex; align-items: flex-end; gap: 2px; height: 25px; flex: none; padding-left: 6px; }
.subtab { height: 22px; border: 1px solid #888890; border-bottom: 0; border-radius: 2px 2px 0 0; background: linear-gradient(#eee, #c8c8c8); color: #333; font-weight: bold; white-space: nowrap; }
.subtab.active { height: 24px; background: #fafafa; color: #000; }
.s154 { width: 154px; } .s100 { width: 100px; } .s74 { width: 74px; }
.frame { flex: 1; min-height: 0; display: flex; margin: 0 5px 4px 3px; padding: 2px; border: 1px solid #77777f; background: #fafafa; }
.frame-in { flex: 1; min-width: 0; display: flex; flex-direction: column; border: 1px solid #77777f; background: #fff; }
.scroll { display: flex; height: 17px; background: #dcdcdc; border-top: 1px solid #c8c8c8; flex: none; }
.scroll-btn { width: 17px; border: 0; border-right: 1px solid #999; background: #fff; }
.scroll-btn svg { width: 10px; height: 10px; }
.operations { position: relative; flex: 1; min-width: 0; display: flex; flex-direction: column; background: #fff; }

/* data grids */
.gridclip { flex: 1; min-height: 0; overflow: hidden; background: #fff; }
.gridclip.boxed { border: 1px solid #85858f; }
.operations .boxed { border-width: 1px 0 0 1px; }
.grid { table-layout: fixed; border-collapse: separate; border-spacing: 0; width: 0; }
.grid td, .grid th { padding: 0 2px; overflow: hidden; white-space: nowrap; }
.grid th { height: 21px; border: solid #dedede; border-width: 2px 2px 1px 0; background: #fcfcfc; font-size: 11px; font-weight: normal; text-align: left; padding: 0 0 0 3px; }
.grid .band td { height: 9px; background: #fcfcfc; border-right: 1px solid #dedede; }
.grid tbody td { height: 21px; border: solid #9a9a9a; border-width: 0 1px 1px 0; }
.grid-structure tbody td, .grid-ops tbody td { height: 20px; font-size: 11px; }
.grid tbody .ind { background: #f0f0f0; padding: 0 1px; }
.grid thead th:first-child { padding: 0 1px; }
.mark { display: block; width: 8px; height: 10px; margin: 0 auto; }
.grid .r { text-align: right; }
.grid .c { text-align: center; }
.grid .tick-cell { padding-left: 7px; }
.alt td { background: #efefef; }
.grid .y { background: #ffffe1; }
.sel td { background: #3399ff; color: #fff; }
.grid .sel td:not(.ind) { border-top: 1px dotted #c8701c; border-bottom: 1px dotted #c8701c; }
.grid .sel td.focus { border: 1px dotted #000; background: #fff; color: #000; padding-left: 1px; }
.grid .sel td.focus.gray { background: #efefef; }
.c12 { width: 12px; } .c37 { width: 37px; } .c40 { width: 40px; } .c50 { width: 50px; } .c59 { width: 59px; }
.c60 { width: 60px; } .c64 { width: 64px; } .c72 { width: 72px; } .c74 { width: 74px; } .c75 { width: 75px; }
.c90 { width: 90px; } .c100 { width: 100px; } .c140 { width: 140px; } .c150 { width: 150px; }
.c200 { width: 200px; } .c240 { width: 240px; }
.grid td.tree { padding: 0 2px 0 0; }
.treecell, .btncell, .datecell, .expand, .memocell { display: flex; align-items: center; justify-content: space-between; }
.treecell .node { width: 38px; height: 18px; background: #fff; flex: none; }
.treecell span { flex: 1; padding-left: 3px; }
.btncell.end { justify-content: flex-end; gap: 3px; }
.cellbtn { width: 15px; height: 16px; border: 1px solid #77777c; background: #dedede; color: #000; font-size: 10px; line-height: 12px; flex: none; }
.datecell { height: 18px; overflow: hidden; margin-right: -1px; }
.datecell span { width: 53px; overflow: hidden; }
.datecell button, .memocell button { width: 17px; height: 17px; border: 1px solid #666; background: #fff; flex: none; }
.datecell svg, .memocell button svg { width: 8px; height: 8px; }
.expand { padding-right: 2px; }
.expand button { width: 13px; height: 18px; border: 0; background: #fff; }
.expand svg { width: 9px; height: 9px; }
.sorted { display: flex; align-items: center; gap: 6px; padding-left: 3px; }
.sorted svg { width: 10px; height: 10px; }
.memo { display: inline-grid; vertical-align: middle; width: 16px; height: 14px; line-height: 12px; color: #999; }
.memo svg, .memo i { grid-area: 1 / 1; width: 16px; height: 14px; }
.memo i { font: italic bold 10px/13px "Liberation Serif", serif; text-align: center; padding-right: 2px; }
.memocell { padding-left: 17px; margin-right: -1px; }

/* ABK upper area */
.upper { display: flex; flex: none; }
.statuspane { width: 191px; flex: none; display: flex; flex-direction: column; }
.statuspane .tabs { height: 22px; padding-left: 0; border-color: #a9abc0; }
.statuspane .tab { height: 19px; }
.statuspane .tab.active { height: 21px; border-left: 0; padding-left: 8px; }
.statusbody { flex: 1; padding: 15px 4px; text-align: right; font-size: 13px; font-weight: bold; background: #bdbfcf; border-bottom: 1px solid #85858f; }
.splitter { width: 4px; display: flex; align-items: center; flex: none; background: #f4f4f8; }
.splitter svg { width: 4px; height: 20px; }
.preview { flex: 1; display: flex; justify-content: flex-end; align-items: flex-start; gap: 1px; border: 1px solid #bbb; border-radius: 3px; background: #e8e8e8; }
.flat { width: 22px; height: 20px; border: 1px solid #d4d4d4; background: linear-gradient(#fafafa, #f2f2f2 48%, #ddd 50%, #eee); }
.flat svg { width: 16px; height: 16px; }

/* status bar */
.statusbar { display: flex; gap: 2px; height: 20px; flex: none; padding-top: 1px; margin-top: 1px; font: 11px/17px "Open Sans", "Noto Sans", sans-serif; }
.cell { height: 18px; border: solid #a0a0a0; border-width: 1px 0 0 1px; box-shadow: inset -1px -1px #fff; padding: 0 2px; white-space: nowrap; overflow: hidden; flex: none; }
.cell.key { text-align: right; padding-right: 6px; }
.cell.mid { text-align: center; }
.cell.grow { flex: 1; }
.cell.last { display: flex; justify-content: flex-end; align-items: flex-end; }
.grip { width: 12px; height: 12px; }
.k62 { width: 62px; } .k79 { width: 79px; } .k87 { width: 87px; } .k99 { width: 99px; }
.k112 { width: 112px; } .k177 { width: 177px; }
.cell a { color: #0000e0; font-size: 12px; font-family: "Liberation Sans", Arial, sans-serif; text-underline-offset: 2px; }

/* numbered markers lying over the windows */
.callout { position: absolute; border: 3px solid #f60; pointer-events: none; }
.badge { position: absolute; width: 26px; height: 26px; background: #f60; color: #fff; font: 800 24px/26px Inter, sans-serif; text-align: center; }
.callout.around { inset: 0 0 auto 0; height: 128px; }
.b3 { left: 34px; top: 95px; }
.m1 { left: 143px; top: 114px; width: 213px; height: 29px; }
.b1 { left: 360px; top: 114px; }
.b2 { left: 349px; top: 160px; }
.m5 { left: 631px; top: 152px; width: 88px; height: 29px; }
.b5 { left: 632px; top: 154px; }
.b4 { left: 140px; top: 362px; }
.n1 { left: 119px; top: 441px; width: 201px; height: 26px; }
.nb1 { left: 323px; top: 441px; }
.n5 { left: 813px; top: 438px; width: 97px; height: 29px; }
.nb5 { left: 814px; top: 440px; }
```
